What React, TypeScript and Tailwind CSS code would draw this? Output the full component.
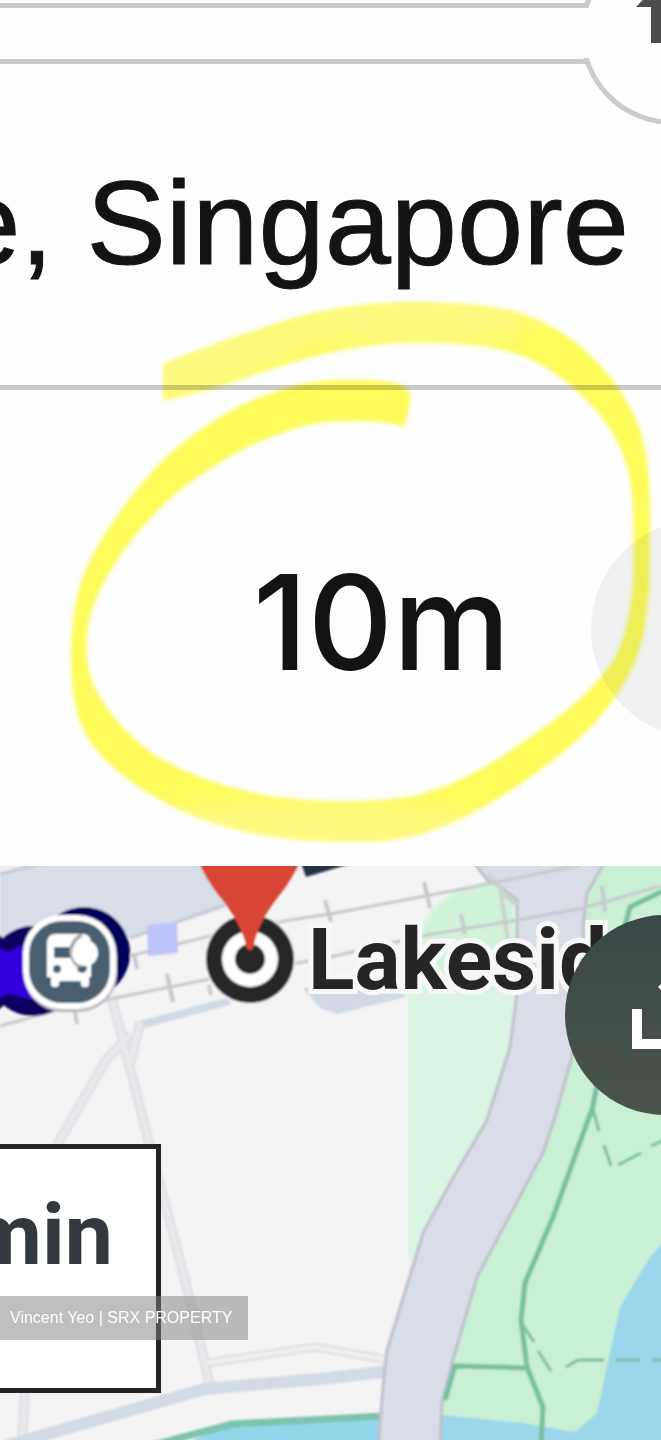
type Point = [number, number];

// closed path through the midpoints, rounded at every point
const smoothPath = (points: Point[]) => {
  const mid = (a: Point, b: Point) => `${(a[0] + b[0]) / 2} ${(a[1] + b[1]) / 2}`;
  const last = points[points.length - 1];
  const curves = points.map((p, i) => `Q${p[0]} ${p[1]} ${mid(p, points[(i + 1) % points.length])}`);
  return `M${mid(last, points[0])}${curves.join('')}Z`;
};

const markerPoints: Point[] = [
  [163, 364], [163, 364], [213, 344], [290, 319], [328, 309], [386, 302], [443, 302], [501, 307], [539, 319],
  [577, 342], [608, 373], [631, 407], [643, 437], [650, 477], [650, 580], [648, 600], [644, 637], [631, 673],
  [612, 703], [589, 730], [558, 757], [520, 785], [474, 813], [428, 833], [386, 842], [328, 842], [275, 838],
  [221, 827], [167, 805], [117, 773], [87, 740], [73, 703], [70, 643], [76, 600], [84, 572], [102, 537],
  [137, 488], [171, 451], [225, 412], [275, 391], [309, 382], [336, 380], [386, 380], [410, 387], [410, 407],
  [404, 427], [404, 427], [382, 421], [328, 421], [298, 427], [252, 444], [213, 466], [171, 496], [133, 537],
  [117, 560], [98, 592], [86, 627], [87, 670], [102, 703], [129, 735], [160, 760], [213, 783], [271, 797],
  [328, 802], [393, 800], [432, 792], [482, 770], [531, 737], [577, 703], [608, 670], [623, 643], [632, 600],
  [634, 560], [633, 490], [625, 457], [608, 423], [574, 387], [539, 362], [501, 348], [443, 342], [386, 343],
  [328, 352], [275, 368], [213, 389], [163, 401], [163, 401],
];
const markerPath = smoothPath(markerPoints);

const Marker = () => (
  <svg
    viewBox="0 0 661 866"
    className="pointer-events-none absolute top-0 left-0 h-[866px] w-[661px] mix-blend-multiply"
    aria-hidden="true"
  >
    <defs>
      <filter id="soft">
        <feGaussianBlur stdDeviation="2" />
      </filter>
      <filter id="fade" x="-50%" y="-100%" width="200%" height="300%">
        <feGaussianBlur stdDeviation="14" />
      </filter>
      <clipPath id="marker">
        <path d={markerPath} />
      </clipPath>
    </defs>
    <g filter="url(#soft)">
      <path d={markerPath} fill="#fffc5a" />
      <g clipPath="url(#marker)">
        <g filter="url(#fade)" fill="#fffb84">
          <ellipse cx="215" cy="363" rx="110" ry="26" transform="rotate(-18 215 363)" />
          <ellipse cx="415" cy="320" rx="120" ry="26" />
          <ellipse cx="310" cy="828" rx="170" ry="26" />
        </g>
      </g>
    </g>
  </svg>
);

const Header = () => (
  <header className="relative flex h-[385px] flex-col pt-[3px]">
    <div className="h-[61px] border-y-[5px] border-[#cbcbcb]" />
    <button
      aria-label="Directions"
      className="absolute -top-[60px] left-[580px] h-[185px] w-[185px] rounded-full border-[5px] border-[#cbcbcb] bg-[#fefefe]"
    >
      <span className="absolute top-[63px] -left-[9px] h-[50px] w-5 bg-[#fefefe]" />
      <svg viewBox="0 0 70 72" className="absolute top-[26px] left-[51px] h-[72px] w-[70px]" aria-hidden="true">
        <path d="M35 0L70 36H55V72H15V36H0Z" fill="#4d4d4d" />
      </svg>
    </button>
    <div className="mt-[99px] flex justify-end pr-8">
      <h1 className="text-[119px] leading-[120px] whitespace-nowrap [-webkit-text-stroke:1px_#131313]">e, Singapore</h1>
    </div>
  </header>
);

const Distance = () => (
  <section className="relative flex h-[481px] items-center border-t-[5px] border-[#cbcbcb] pb-3 pl-[253px]">
    <p className="font-['Inter',sans-serif] text-[132px] leading-none font-medium">10m</p>
    <button aria-label="Options" className="absolute top-[130px] left-[591px] h-[218px] w-[218px] rounded-full bg-[#eff1f3]" />
  </section>
);

const lane = 'M112 1000L128 1060L147 1135L185 1280L210 1385M140 1022L131 1062M131 1034L106 1060L57 1145M25 1390L22 1445';
const track =
  'M130 956L210 936L290 920L330 914L473 887L580 865M0 1026L65 1008L205 980L330 957L427 935L507 922L583 908L661 886';
const ties =
  'M167 974L173 1002M134 953L137 969M75 1012L77 1024M209 985L211 995M325 900L331 922M424 882L430 908M461 914L465 934M602 886L605 912';

const MapArt = () => (
  <svg
    viewBox="0 866 661 574"
    preserveAspectRatio="xMinYMin slice"
    className="absolute inset-0 h-full w-full"
    fill="none"
    aria-hidden="true"
  >
    <defs>
      <filter id="mapSoft">
        <feGaussianBlur stdDeviation="1" />
      </filter>
    </defs>
    <path d="M0 866H661V1440H0Z" fill="#f4f4f4" />
    <g filter="url(#mapSoft)">
      {/* station area */}
      <path d="M0 850H260V894L232 903L130 938L0 978Z" fill="#d8dee8" />
      <path d="M0 850H60L0 874Z" fill="#eceef2" />
      <path d="M0 874L45 863M130 938L232 903L262 892" stroke="#c5cad3" strokeWidth="3" />
      <path d="M303 988L320 1008L337 1014L405 997V985Z" fill="#d0d9e4" />
      <path d="M136 1026L230 1001" stroke="#d0dae4" strokeWidth="8" />

      {/* parks */}
      <path d="M408 990V1260H440L530 1050V880L490 879L455 890L430 909L418 935Z" fill="#d9f5e3" />
      <path d="M425 932Q436 896 490 880L512 900L515 990H425Z" fill="#d0f3d9" />
      <path d="M560 850H680V1460H430L450 1300L560 1100Z" fill="#c9efd5" />

      {/* water */}
      <path d="M680 1225L650 1257L620 1307L607 1367L597 1413L575 1432L563 1430L523 1423L440 1415V1460H680Z" fill="#9bd6ea" />
      <path d="M150 1460L232 1422L384 1415V1460Z" fill="#92d6e9" />
      <path d="M150 1446L232 1424L384 1416" stroke="#7dc3ae" strokeWidth="7" />

      {/* small roads */}
      <path d={lane} stroke="#dfdee4" strokeWidth="10" />
      <path d={lane} stroke="#e8e8ed" strokeWidth="6" />
      <path d="M207 1363L315 1347L390 1360" stroke="#e0dee0" strokeWidth="9" />
      <path d="M207 1363L315 1347L390 1360" stroke="#f0f0f0" strokeWidth="5" />
      <path d="M5 1446L205 1389L330 1378L390 1371" stroke="#d2dae5" strokeWidth="12" />

      {/* main road */}
      <path
        d="M465 850L487 880L502 888L517 900V993L510 1047L487 1120L450 1183L423 1233L417 1253L387 1350L383 1387L378 1450H440L442 1403L453 1360L477 1277L543 1153L555 1117L572 1057L583 1000L583 927L587 893L612 850Z"
        fill="#d8dde7"
        stroke="#c0bfcb"
        strokeWidth="3"
      />
      <path d="M488 874L500 888L508 940M502 893L517 905" stroke="#cbd2cf" strokeWidth="4" />

      {/* footpaths */}
      <g stroke="#78bf9f" strokeWidth="5">
        <path d="M665 890L630 907L624 930M600 1070L592 1110L588 1120L553 1217L525 1283L521 1320L527 1367L543 1407L541 1445M527 1368L455 1366L445 1400" />
        <path d="M592 1106L599 1131M604 1145L611 1166M618 1165L641 1153M651 1146L664 1140" strokeWidth="3" />
        <path d="M522 1324L534 1342M538 1351L551 1371M566 1367L578 1360H604M616 1360H640M652 1360H664" strokeWidth="3" />
      </g>

      {/* railway */}
      <path d={track} stroke="#c9c8ce" strokeWidth="3" />
      <path d={ties} stroke="#c9c8ce" strokeWidth="4" />
      <path d="M147 925L177 922L178 953L148 956Z" fill="#bcc5fb" />
      <path d="M300 860L306 877L350 864Z" fill="#25334a" />

      {/* route dots */}
      <circle cx="-28" cy="972" r="46" fill="#0b0062" />
      <circle cx="33" cy="971" r="45" fill="#0b0062" />
      <circle cx="84" cy="953" r="46" fill="#02005a" />
      <path d="M-10 944L8 952L25 944L35 1000L8 994L-10 1002Z" fill="#3200dc" />

      {/* bus stop */}
      <rect x="24" y="918" width="93" height="94" rx="38" fill="#b9b9bf" />
      <rect x="23" y="915" width="93" height="94" rx="38" fill="#fff" />
      <rect x="29" y="921" width="81" height="82" rx="33" fill="#475f70" />
      <path d="M47 943Q47 934 56 934H82Q91 934 91 943V977H89V984Q89 987 86 987H84Q81 987 81 984V981H59V984Q59 987 56 987H54Q51 987 51 984V977H47Z" fill="#fff" />
      <rect x="54" y="947" width="30" height="11" fill="#475f70" />
      <circle cx="57" cy="969" r="4" fill="#475f70" />
      <circle cx="82" cy="968" r="5" fill="#475f70" />
      <path d="M82 935A18 18 0 0 0 80 967" stroke="#a3a8ae" strokeWidth="4" />
      <circle cx="85" cy="953" r="13" fill="#fff" />

      {/* target and pin */}
      <circle cx="250" cy="959" r="46" fill="#f4f4f4" />
      <circle cx="250" cy="959" r="44" fill="#252525" />
      <circle cx="250" cy="959" r="28" fill="#fff" />
      <circle cx="250" cy="959" r="15" fill="#252525" />
      <path d="M194 850Q203 876 219 896Q240 920 247 949Q250 951 253 949Q258 922 278 897Q294 878 305 850Z" fill="#d94534" />
    </g>
  </svg>
);

const MapPanel = () => (
  <section className="relative h-[574px] overflow-hidden font-['Roboto',sans-serif] font-bold">
    <MapArt />
    <span className="absolute top-[44px] left-[308px] text-[86px] leading-[100px] whitespace-nowrap text-[#252525] [-webkit-text-stroke:10px_#f6f7f6] [paint-order:stroke]">
      Lakeside
    </span>
    <div className="absolute top-[278px] -left-[100px] flex h-[249px] w-[261px] justify-end border-[5px] border-[#252525] bg-white pt-[36px] pr-[43px]">
      <span className="text-[86px] leading-[100px] text-[#32383e]">min</span>
    </div>
    <button
      aria-label="Share"
      className="absolute top-[49px] left-[565px] h-[200px] w-[250px] rounded-full bg-linear-to-b from-[#394747] to-[#4a554a]"
    >
      <svg viewBox="0 0 116 82" className="absolute top-[52px] left-[67px] h-[82px] w-[116px]" fill="none" aria-hidden="true">
        <path d="M5 42V77H111V42" stroke="#fff" strokeWidth="10" />
        <path d="M58 -12L26 20L33 27L53 7V60H63V7L83 27L90 20Z" fill="#fff" />
      </svg>
    </button>
    <p className="absolute top-[430px] left-0 bg-[#808080]/50 pr-4 pl-[10px] font-['Liberation_Sans',Arial,sans-serif] text-base leading-[44px] font-normal whitespace-nowrap text-white">
      Vincent Yeo | SRX PROPERTY
    </p>
  </section>
);

const App = () => (
  <main className="relative overflow-hidden bg-[#fefefe] font-['Liberation_Sans',Arial,sans-serif] text-[#131313]">
    <Header />
    <Distance />
    <Marker />
    <MapPanel />
  </main>
);

export default App;
